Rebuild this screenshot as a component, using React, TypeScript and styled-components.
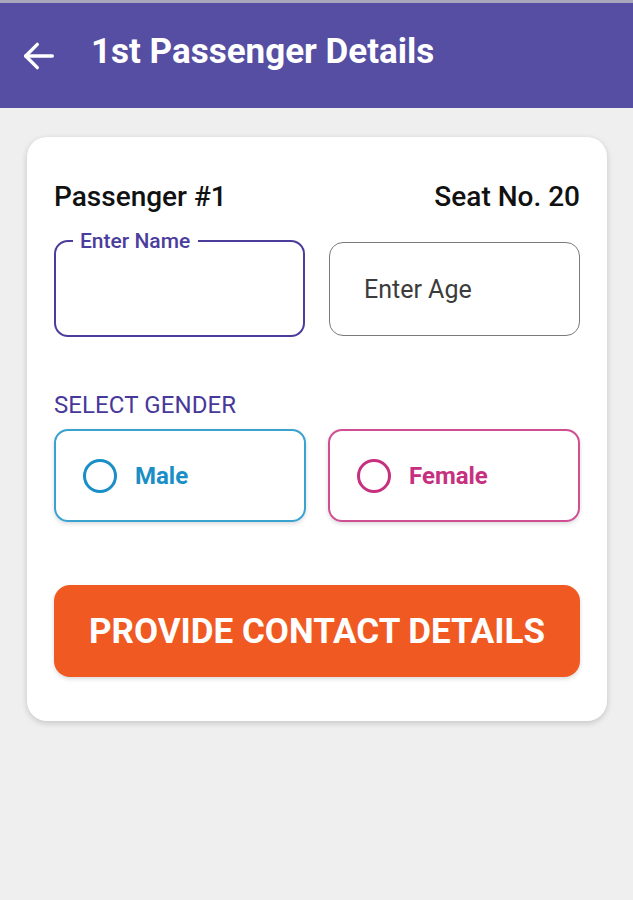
import React from "react";
import styled, { createGlobalStyle } from "styled-components";

const Global = createGlobalStyle`
  html, body { margin: 0; padding: 0; background: #efefef; }
  body { font-family: Roboto, "Noto Sans", Arial, sans-serif; }
  * { box-sizing: border-box; }
`;

const Page = styled.div`
  min-height: 900px;
  background: #efefef;
  border-top: 3px solid #a9a7bb;
`;

const AppBar = styled.header`
  height: 105px;
  background: #564ea2;
  display: flex;
  align-items: center;
  padding: 0 0 9px 19px;
  gap: 32px;
`;

const BackButton = styled.button`
  background: none;
  border: none;
  padding: 0;
  margin-top: 9px;
  display: flex;
  align-items: center;
  color: #fff;
  cursor: pointer;
`;

const Title = styled.h1`
  margin: 0;
  color: #fff;
  font-family: Roboto, sans-serif;
  font-weight: 700;
  font-size: 35px;
  letter-spacing: 0;
`;

const Card = styled.section`
  margin: 29px 26px 0 27px;
  background: #fff;
  border-radius: 20px;
  box-shadow: 0 2px 6px rgba(0, 0, 0, 0.18);
  padding: 43px 27px 44px 27px;
  display: flex;
  flex-direction: column;
`;

const HeadRow = styled.div`
  display: flex;
  justify-content: space-between;
  align-items: center;
  font-size: 28px;
  font-weight: 500;
  color: #111;
  line-height: 33px;
`;

const FieldRow = styled.div`
  display: grid;
  grid-template-columns: 1fr 1fr;
  column-gap: 24px;
  align-items: end;
  margin-top: 16px;
`;

const NameField = styled.fieldset`
  margin: 0;
  min-width: 0;
  height: 108px;
  border: 2px solid #4b3d9c;
  border-radius: 14px;
  padding: 0 20px;
`;

const NameLegend = styled.legend`
  margin-left: -3px;
  padding: 0 8px 0 7px;
  font-size: 21px;
  line-height: 24px;
  font-weight: 500;
  color: #4b3d9c;
`;

const AgeField = styled.div`
  height: 94px;
  margin-bottom: 1px;
  border: 1.5px solid #7a7a7a;
  border-radius: 14px;
  display: flex;
  align-items: center;
  padding-left: 34px;
  font-size: 25px;
  color: #3c3c3c;
`;

const SectionLabel = styled.div`
  margin-top: 54px;
  font-size: 24px;
  line-height: 28px;
  color: #46399a;
  letter-spacing: 0.1px;
`;

const GenderRow = styled.div`
  display: grid;
  grid-template-columns: 1fr 1fr;
  column-gap: 22px;
  margin-top: 10px;
`;

const GenderOption = styled.label<{ $color: string; $border: string }>`
  height: 93px;
  border: 2px solid ${(p) => p.$border};
  border-radius: 14px;
  box-shadow: 0 2px 4px rgba(0, 0, 0, 0.14);
  display: flex;
  align-items: center;
  padding-left: 27px;
  gap: 18px;
  color: ${(p) => p.$color};
  font-size: 24px;
  font-weight: 700;
  cursor: pointer;
`;

const Radio = styled.span<{ $color: string }>`
  width: 34px;
  height: 34px;
  border-radius: 50%;
  border: 3px solid ${(p) => p.$color};
  flex: none;
`;

const SubmitButton = styled.button`
  margin-top: 63px;
  height: 92px;
  border: none;
  border-radius: 16px;
  background: #f05a22;
  color: #fff;
  font-family: Roboto, sans-serif;
  font-size: 35px;
  font-weight: 700;
  box-shadow: 0 2px 4px rgba(0, 0, 0, 0.15);
  cursor: pointer;
`;

const BackArrow = () => (
  <svg width="40" height="40" viewBox="0 0 24 24" fill="none" stroke="currentColor" strokeWidth="2" strokeLinecap="round" strokeLinejoin="round">
    <path d="M20 12H4" />
    <path d="M11 5l-7 7 7 7" />
  </svg>
);

export default function App() {
  return (
    <>
      <Global />
      <Page>
        <AppBar>
          <BackButton aria-label="Back">
            <BackArrow />
          </BackButton>
          <Title>1st Passenger Details</Title>
        </AppBar>
        <Card>
          <HeadRow>
            <span>Passenger #1</span>
            <span>Seat No. 20</span>
          </HeadRow>
          <FieldRow>
            <NameField>
              <NameLegend>Enter Name</NameLegend>
            </NameField>
            <AgeField>Enter Age</AgeField>
          </FieldRow>
          <SectionLabel>SELECT GENDER</SectionLabel>
          <GenderRow>
            <GenderOption $color="#1a8ec6" $border="#3aa2cf">
              <Radio $color="#1a8ec6" />
              Male
            </GenderOption>
            <GenderOption $color="#c6317f" $border="#cf4f92">
              <Radio $color="#c6317f" />
              Female
            </GenderOption>
          </GenderRow>
          <SubmitButton>PROVIDE CONTACT DETAILS</SubmitButton>
        </Card>
      </Page>
    </>
  );
}
